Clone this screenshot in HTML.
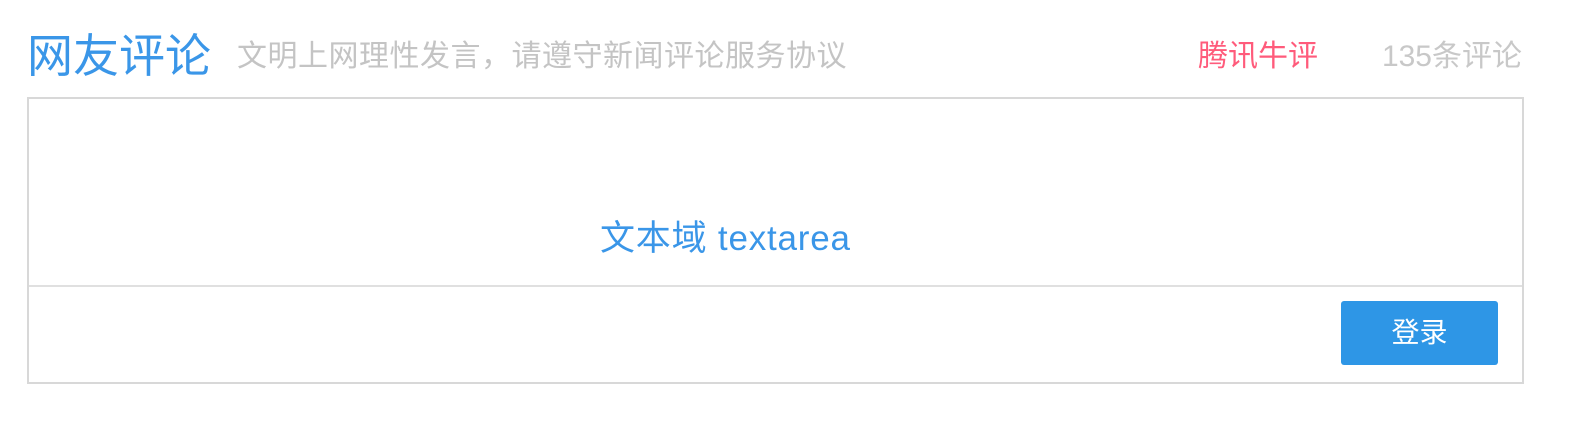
<!DOCTYPE html>
<html><head><meta charset="utf-8"><style>
body{margin:0;width:1572px;height:446px;background:#fff;font-family:"Liberation Sans","Noto Sans CJK SC",sans-serif;position:relative;overflow:hidden}
.a{position:absolute;white-space:nowrap;line-height:1}
</style></head><body>
<div class="a" style="left:27px;top:33px;font-size:46px;color:#3a96e8">网友评论</div>
<div class="a" style="left:237px;top:42px;font-size:30px;color:#c4c4c4;letter-spacing:0.5px">文明上网理性发言，请遵守新闻评论服务协议</div>
<div class="a" style="left:1198px;top:42px;font-size:30px;color:#ff5b7b">腾讯牛评</div>
<div class="a" style="right:50px;top:42px;font-size:30px;color:#c8c8c8">135条评论</div>
<div style="position:absolute;left:27px;top:97px;width:1493px;height:283px;border:2px solid #d8d8d8"></div>
<div style="position:absolute;left:29px;top:285px;width:1493px;height:2px;background:#e0e0e0"></div>
<div class="a" style="left:600px;top:221px;font-size:35px;color:#3a96e8;letter-spacing:0.8px">文本域 textarea</div>
<div style="position:absolute;left:1341px;top:301px;width:157px;height:64px;background:#2e96e6;border-radius:3px;color:#fff;font-size:28px;line-height:64px;text-align:center">登录</div>
</body></html>
